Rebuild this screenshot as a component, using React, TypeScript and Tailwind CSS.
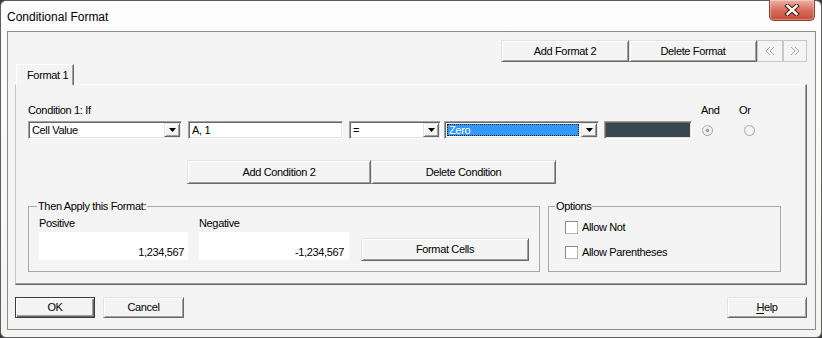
import React from "react";

const raised =
  "bg-[#f4f4f4] border border-t-[#e3e3e3] border-l-[#e3e3e3] border-b-[#696969] border-r-[#696969] shadow-[inset_1px_1px_0_#ffffff,inset_-1px_-1px_0_#a0a0a0]";
const sunken =
  "border border-t-[#a0a0a0] border-l-[#a0a0a0] border-b-white border-r-white shadow-[inset_1px_1px_0_#696969,inset_-1px_-1px_0_#e3e3e3]";

function Btn({ children, className = "" }: { children?: React.ReactNode; className?: string }) {
  return (
    <div className={`${raised} flex items-center justify-center leading-[13px] shrink-0 ${className}`}>
      {children}
    </div>
  );
}

function Arrow() {
  return (
    <div className={`${raised} w-[16px] h-[14px] flex items-center justify-center shrink-0`}>
      <svg width="7" height="4" viewBox="0 0 7 4">
        <path d="M0 0H7L3.5 4Z" fill="#000" />
      </svg>
    </div>
  );
}

function Combo({ className, text }: { className: string; text: string }) {
  return (
    <div className={`${sunken} bg-white p-[1px] flex h-[18px] shrink-0 ${className}`}>
      <div className="flex-1 flex items-center pl-[2px] leading-[13px] min-w-0">{text}</div>
      <Arrow />
    </div>
  );
}

function Radio({ checked }: { checked?: boolean }) {
  return (
    <svg width="11" height="11" viewBox="0 0 11 11" className="shrink-0">
      <circle cx="5.5" cy="5.5" r="5" fill="#f4f4f4" stroke="#a0a0a0" />
      <path d="M1.8 8 A4.2 4.2 0 0 1 8 1.8" fill="none" stroke="#c8c8c8" />
      {checked && <circle cx="5.5" cy="5.5" r="1.8" fill="#a0a0a0" />}
    </svg>
  );
}

function Check({ label }: { label: string }) {
  return (
    <div className="flex items-center h-[13px]">
      <div className="w-[13px] h-[13px] bg-white border border-t-[#8a8a8a] border-l-[#8a8a8a] border-b-[#b8b8b8] border-r-[#b8b8b8] shrink-0" />
      <span className="ml-[4px] leading-[13px]">{label}</span>
    </div>
  );
}

function Chevrons({ dir }: { dir: "l" | "r" }) {
  const pts =
    dir === "l"
      ? ["5,1 1,5 5,9", "9,1 5,5 9,9"]
      : ["1,1 5,5 1,9", "5,1 9,5 5,9"];
  return (
    <svg width="10" height="10" viewBox="0 0 10 10">
      {pts.map((p) => (
        <polyline key={p} points={p} fill="none" stroke="#a8a8a8" strokeWidth="1" />
      ))}
    </svg>
  );
}

export default function App() {
  return (
    <div className="w-[822px] h-[338px] bg-[#3a3a3a] font-['Liberation_Sans',Arial,sans-serif] text-[11px] tracking-[-0.35px] text-black">
      <div className="w-[822px] h-[338px] rounded-[6px] border border-[#5e5e5e] bg-gradient-to-b from-[#fdfdfd] via-[#f9f9f7] to-[#f3f3f0] flex flex-col pl-[6px] pr-[5px]">
        {/* title bar */}
        <div className="h-[30px] flex items-start shrink-0">
          <span className="mt-[9px] text-[12px] tracking-normal leading-[14px]">Conditional Format</span>
          <div className="ml-auto mr-[1px] -mt-[1px] w-[46px] h-[21px] rounded-b-[5px] border border-[#8b3a2e] border-t-0 bg-gradient-to-b from-[#eab0a2] via-[#d8705d] to-[#c54a36] shadow-[inset_0_0_0_1px_rgba(255,255,255,0.35)] flex items-center justify-center">
            <svg width="16" height="12" viewBox="0 0 16 12">
              <path d="M3.5 2 L12.5 10 M12.5 2 L3.5 10" stroke="#4b1c14" strokeWidth="4.5" strokeLinecap="square" />
              <path d="M3.5 2 L12.5 10 M12.5 2 L3.5 10" stroke="#ffffff" strokeWidth="2.4" strokeLinecap="square" />
            </svg>
          </div>
        </div>

        {/* client area */}
        <div className="h-[299px] border border-[#8c8c8c] bg-[#f4f4f4] flex flex-col">
          {/* top buttons */}
          <div className="mt-[8px] h-[22px] flex justify-end pr-[8px] shrink-0">
            <Btn className="w-[128px] h-[22px]">Add Format 2</Btn>
            <Btn className="w-[128px] h-[22px]">Delete Format</Btn>
            <div className="w-[26px] h-[22px] border border-[#c8c8c8] bg-[#f4f4f4] flex items-center justify-center shrink-0">
              <Chevrons dir="l" />
            </div>
            <div className="w-[24px] h-[22px] border border-[#c8c8c8] bg-[#f4f4f4] flex items-center justify-center shrink-0">
              <Chevrons dir="r" />
            </div>
          </div>

          {/* tab */}
          <div className="mt-[2px] pl-[8px] flex shrink-0">
            <div className="relative z-10 w-[58px] h-[21px] bg-[#f4f4f4] border-t border-l border-r border-t-white border-l-white border-r-[#696969] shadow-[inset_-1px_0_0_#a0a0a0] flex items-center pl-[10px] pt-[1px] leading-[13px]">
              Format 1
            </div>
          </div>

          {/* tab panel */}
          <div className="-mt-[1px] ml-[7px] w-[792px] h-[201px] shrink-0 border border-t-white border-l-[#c4c4c4] border-b-[#696969] border-r-[#696969] shadow-[inset_-1px_-1px_0_#a0a0a0] pl-[12px] flex flex-col">
            <div className="mt-[19px] h-[13px] flex leading-[13px]">
              <span className="w-[673px]">Condition 1: If</span>
              <span className="w-[38px]">And</span>
              <span>Or</span>
            </div>

            <div className="mt-[4px] h-[18px] flex items-center">
              <Combo className="w-[154px]" text="Cell Value" />
              <div className={`${sunken} ml-[6px] w-[155px] h-[18px] bg-white flex items-center pl-[3px] leading-[13px] shrink-0`}>
                A, 1
              </div>
              <Combo className="ml-[6px] w-[92px]" text="=" />
              <div className={`${sunken} ml-[3px] bg-white p-[1px] flex h-[18px] w-[155px] shrink-0`}>
                <div className="flex-1 mr-[2px] ml-[1px] my-[1px] bg-[#3399ff] text-white border border-dotted border-[#1a1a1a] flex items-center pl-[1px] leading-[12px]">
                  Zero
                </div>
                <Arrow />
              </div>
              <div className={`${sunken} ml-[5px] w-[88px] h-[18px] bg-[#394850] shrink-0`} />
              <div className="ml-[10px] flex">
                <Radio checked />
              </div>
              <div className="ml-[31px] flex">
                <Radio />
              </div>
            </div>

            <div className="mt-[21px] h-[24px] flex pl-[159px]">
              <Btn className="w-[184px] h-[24px]">Add Condition 2</Btn>
              <Btn className="w-[185px] h-[24px]">Delete Condition</Btn>
            </div>

            <div className="mt-[16px] flex items-start">
              <fieldset className="w-[512px] h-[72px] border border-[#a8a8a8] shrink-0">
                <legend className="ml-[8px] px-[1px] leading-[13px]">Then Apply this Format:</legend>
                <div className="flex items-start pl-[10px]">
                  <div className="flex flex-col w-[149px] mt-[4px]">
                    <span className="h-[13px] leading-[13px]">Positive</span>
                    <div className="mt-[2px] h-[28px] bg-white flex items-end justify-end pr-[4px] pb-[1px] leading-[13px]">
                      1,234,567
                    </div>
                  </div>
                  <div className="flex flex-col w-[150px] ml-[11px] mt-[4px]">
                    <span className="h-[13px] leading-[13px]">Negative</span>
                    <div className="mt-[2px] h-[28px] bg-white flex items-end justify-end pr-[5px] pb-[1px] leading-[13px]">
                      -1,234,567
                    </div>
                  </div>
                  <Btn className="ml-[12px] mt-[25px] w-[168px] h-[23px]">Format Cells</Btn>
                </div>
              </fieldset>
              <fieldset className="ml-[8px] w-[233px] h-[72px] border border-[#a8a8a8] shrink-0">
                <legend className="ml-[6px] px-[1px] leading-[13px]">Options</legend>
                <div className="pl-[16px] flex flex-col">
                  <div className="mt-[8px]">
                    <Check label="Allow Not" />
                  </div>
                  <div className="mt-[12px]">
                    <Check label="Allow Parentheses" />
                  </div>
                </div>
              </fieldset>
            </div>
          </div>

          {/* bottom buttons */}
          <div className="mt-[12px] h-[21px] flex pl-[7px] pr-[8px] shrink-0">
            <div className="w-[80px] h-[21px] border border-[#3c3c3c] bg-[#f4f4f4] shadow-[inset_1px_1px_0_#ffffff,inset_-1px_-1px_0_#696969,inset_-2px_-2px_0_#a0a0a0] flex items-center justify-center leading-[13px] shrink-0">
              OK
            </div>
            <Btn className="ml-[8px] w-[81px] h-[21px]">Cancel</Btn>
            <Btn className="ml-auto w-[80px] h-[21px]">
              <span>
                <span className="underline underline-offset-[2px]">H</span>elp
              </span>
            </Btn>
          </div>
        </div>
      </div>
    </div>
  );
}
